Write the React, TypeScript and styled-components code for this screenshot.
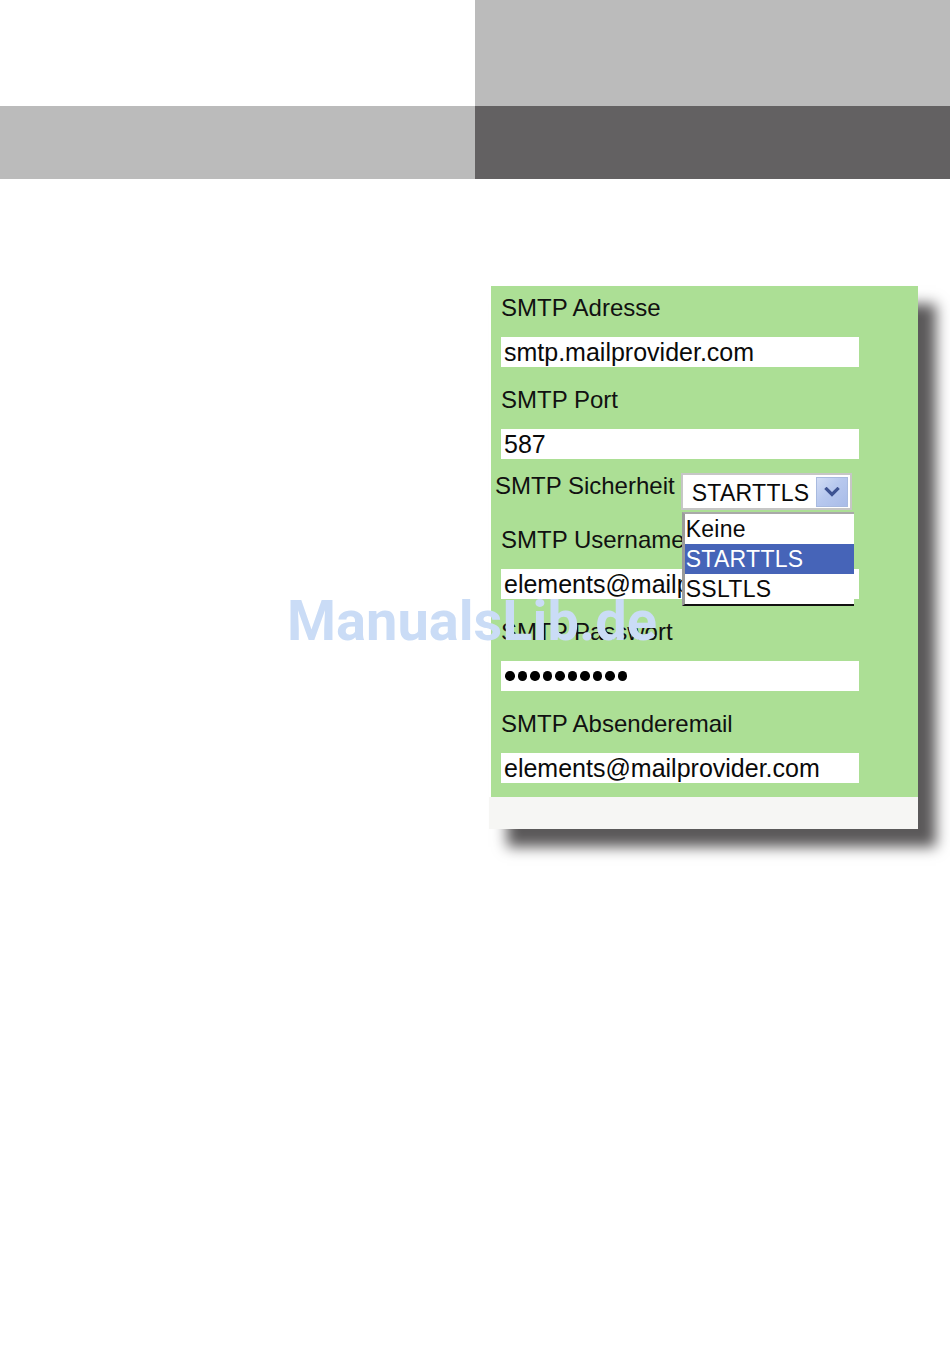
import React from "react";
import styled, { createGlobalStyle } from "styled-components";

const GlobalStyle = createGlobalStyle`
  html, body {
    margin: 0;
    padding: 0;
    background: #ffffff;
  }
  body {
    font-family: "Liberation Sans", Arial, sans-serif;
  }
`;

const Page = styled.div`
  position: relative;
  width: 950px;
  min-height: 1348px;
  background: #ffffff;
  overflow: hidden;
`;

const Header = styled.header`
  display: grid;
  grid-template-columns: 475px 475px;
  grid-template-rows: 106px 73px;
`;

const HeaderCell = styled.div<{ $bg: string }>`
  background: ${(p) => p.$bg};
`;

const Content = styled.main`
  display: flex;
  padding: 107px 0 0 489px;
`;

const Panel = styled.section`
  width: 429px;
  display: flex;
  flex-direction: column;
  box-shadow: 18px 18px 13px #5b595a;
`;

const GreenArea = styled.div`
  margin-left: 2px;
  background: #acdf95;
  padding: 7px 0 14px 10px;
  display: flex;
  flex-direction: column;
  align-items: flex-start;
`;

const Label = styled.div`
  font-size: 24px;
  line-height: 30px;
  height: 30px;
  color: #111111;
  margin-bottom: 14px;
  white-space: nowrap;
`;

const RowLabel = styled(Label)`
  margin-bottom: 0;
`;

const InputBox = styled.div`
  box-sizing: border-box;
  width: 358px;
  height: 30px;
  background: #ffffff;
  font-size: 25px;
  line-height: 30px;
  color: #0a0a0a;
  padding-left: 3px;
  margin-bottom: 18px;
  white-space: nowrap;
  overflow: hidden;
  display: flex;
  align-items: center;
  &:last-child {
    margin-bottom: 0;
  }
`;

const Dots = styled.div`
  display: flex;
  gap: 3px;
  padding-left: 1px;
`;

const Dot = styled.span`
  width: 9.5px;
  height: 9.5px;
  border-radius: 50%;
  background: #000000;
`;

const SelectRow = styled.div`
  display: flex;
  align-items: flex-start;
  gap: 6px;
  margin: -6px 0 15px -6px;
`;

const SelectBox = styled.div`
  position: relative;
  box-sizing: border-box;
  width: 171px;
  height: 37px;
  margin-top: 2px;
  border: 2px solid #c6c6c6;
  background: #ffffff;
  display: flex;
  align-items: center;
  padding: 0 2px 0 9px;
`;

const SelectValue = styled.span`
  flex: 1;
  font-size: 23px;
  line-height: 30px;
  padding-top: 3px;
  color: #0a0a0a;
  white-space: nowrap;
  letter-spacing: 0.3px;
`;

const ArrowButton = styled.span`
  box-sizing: border-box;
  width: 32px;
  height: 30px;
  border: 1px solid #a8badf;
  background: linear-gradient(135deg, #d2ddf5 0%, #b7c8ee 45%, #a9bce8 100%);
  display: flex;
  align-items: center;
  justify-content: center;
`;

const DropList = styled.ul`
  position: absolute;
  left: -1px;
  top: 37px;
  z-index: 2;
  box-sizing: border-box;
  width: 172px;
  margin: 0;
  padding: 0;
  list-style: none;
  background: #ffffff;
  border-top: 2px solid #a9a9a9;
  border-left: 3px solid #9b9b9b;
  border-bottom: 2px solid #111111;
`;

const DropItem = styled.li<{ $active?: boolean }>`
  height: 30px;
  font-size: 23px;
  line-height: 30px;
  padding-left: 1px;
  white-space: nowrap;
  letter-spacing: 0.3px;
  color: ${(p) => (p.$active ? "#ffffff" : "#0a0a0a")};
  background: ${(p) => (p.$active ? "#4664b8" : "transparent")};
`;

const Footer = styled.div`
  height: 32px;
  background: #f6f6f4;
`;

const Watermark = styled.div`
  position: absolute;
  left: 287px;
  top: 593px;
  z-index: 3;
  font-family: Roboto, "Liberation Sans", sans-serif;
  font-weight: 700;
  font-size: 56px;
  line-height: 56px;
  color: #cadcf6;
  white-space: nowrap;
  pointer-events: none;
`;

const Chevron = () => (
  <svg width="16" height="10" viewBox="0 0 16 10" aria-hidden="true">
    <polyline
      points="2.5,2 8,7.5 13.5,2"
      fill="none"
      stroke="#3e5392"
      strokeWidth="3.2"
      strokeLinecap="square"
    />
  </svg>
);

const options = ["Keine", "STARTTLS", "SSLTLS"];

export default function App() {
  return (
    <>
      <GlobalStyle />
      <Page>
        <Header>
          <HeaderCell $bg="#ffffff" />
          <HeaderCell $bg="#bbbbbb" />
          <HeaderCell $bg="#bbbbbb" />
          <HeaderCell $bg="#636162" />
        </Header>
        <Content>
          <Panel>
            <GreenArea>
              <Label>SMTP Adresse</Label>
              <InputBox>smtp.mailprovider.com</InputBox>
              <Label>SMTP Port</Label>
              <InputBox>587</InputBox>
              <SelectRow>
                <RowLabel>SMTP Sicherheit</RowLabel>
                <SelectBox>
                  <SelectValue>STARTTLS</SelectValue>
                  <ArrowButton>
                    <Chevron />
                  </ArrowButton>
                  <DropList>
                    {options.map((o) => (
                      <DropItem key={o} $active={o === "STARTTLS"}>
                        {o}
                      </DropItem>
                    ))}
                  </DropList>
                </SelectBox>
              </SelectRow>
              <Label>SMTP Username</Label>
              <InputBox>elements@mailprovider.com</InputBox>
              <Label>SMTP Passwort</Label>
              <InputBox>
                <Dots>
                  {Array.from({ length: 10 }).map((_, i) => (
                    <Dot key={i} />
                  ))}
                </Dots>
              </InputBox>
              <Label>SMTP Absenderemail</Label>
              <InputBox>elements@mailprovider.com</InputBox>
            </GreenArea>
            <Footer />
          </Panel>
        </Content>
        <Watermark>ManualsLib.de</Watermark>
      </Page>
    </>
  );
}
